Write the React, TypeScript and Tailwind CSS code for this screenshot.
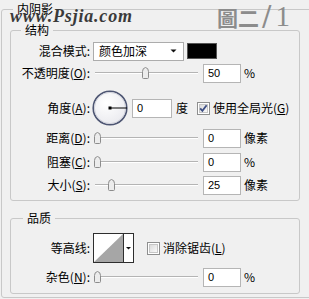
import React from "react";

const Thumb = ({ left }: { left: number }) => (
  <svg
    className="absolute top-[4px]"
    style={{ left }}
    width="9"
    height="12"
    viewBox="0 0 9 12"
  >
    <path
      d="M1.5 4.5 Q1.5 1 4.5 0.5 Q7.5 1 7.5 4.5 L7.5 10.5 Q7.5 11.5 6.5 11.5 L2.5 11.5 Q1.5 11.5 1.5 10.5 Z"
      fill="#ececec"
      stroke="#8c8c8c"
    />
  </svg>
);

const Slider = ({ thumb }: { thumb: number }) => (
  <div className="relative ml-[2px] h-[20px] w-[106px] shrink-0">
    <div className="absolute left-[3px] right-0 top-[9px] h-[1px] bg-[#b4b4b4]" />
    <div className="absolute left-[3px] right-0 top-[10px] h-[1px] bg-white" />
    <Thumb left={thumb} />
  </div>
);

const Label = ({ children }: { children: React.ReactNode }) => (
  <div className="w-[79px] shrink-0 text-right">{children}</div>
);

const U = ({ children }: { children: React.ReactNode }) => (
  <span className="underline underline-offset-[1px]">{children}</span>
);

const Num = ({ value }: { value: string }) => (
  <div className="ml-[5px] h-[19px] w-[38px] shrink-0 border border-[#b5b5b5] bg-white pl-[4px] font-['Liberation_Sans',sans-serif] text-[11px] leading-[17px]">
    {value}
  </div>
);

const SliderRow = ({
  label,
  thumb,
  value,
  unit,
  className,
}: {
  label: React.ReactNode;
  thumb: number;
  value: string;
  unit: string;
  className: string;
}) => (
  <div className={"flex h-[20px] items-center " + className}>
    <Label>{label}</Label>
    <Slider thumb={thumb} />
    <Num value={value} />
    <div className="ml-[3px]">{unit}</div>
  </div>
);

const CheckBox = ({ checked }: { checked: boolean }) => (
  <svg width="13" height="13" viewBox="0 0 13 13" className="shrink-0">
    <defs>
      <linearGradient id={checked ? "cbg1" : "cbg2"} x1="0" y1="0" x2="1" y2="1">
        <stop offset="0" stopColor="#d9d9d9" />
        <stop offset="1" stopColor="#fbfbfb" />
      </linearGradient>
    </defs>
    <rect x="0.5" y="0.5" width="12" height="12" fill="#fff" stroke="#8e8f8f" />
    <rect x="2.5" y="2.5" width="8" height="8" fill={`url(#${checked ? "cbg1" : "cbg2"})`} stroke="#c6c6c6" />
    {checked && (
      <path d="M3.2 6.3 L5.4 8.8 L9.6 3.2" fill="none" stroke="#3d4e84" strokeWidth="1.8" />
    )}
  </svg>
);

export default function App() {
  return (
    <div className="relative h-[299px] w-[309px] overflow-hidden bg-[#f0f0f0] font-['Noto_Sans_CJK_SC',sans-serif] text-[12px] leading-[14px] text-black">
      <fieldset className="ml-[1px] mt-[2px] w-[330px] rounded-[3px] border border-[#c8c8c8] pb-[3px] pl-[8px]">
        <legend className="ml-[3px] px-[4px] leading-[14px]">内阴影</legend>

        <fieldset className="mt-[7px] w-[290px] rounded-[3px] border border-[#c8c8c8] pb-[5px]">
          <legend className="ml-[10px] px-[4px] leading-[14px]">结构</legend>

          <div className="mt-[4px] flex h-[20px] items-center">
            <Label>混合模式:</Label>
            <div className="ml-[3px] flex h-[19px] w-[91px] shrink-0 items-center border border-[#acacac] bg-white pl-[5px]">
              <span className="flex-1">颜色加深</span>
              <svg width="7" height="4" viewBox="0 0 7 4" className="mr-[6px]">
                <path d="M0.5 0.5 L6.5 0.5 L3.5 3.5 Z" fill="#111" />
              </svg>
            </div>
            <div className="ml-[3px] h-[16px] w-[30px] shrink-0 border border-[#555] bg-black" />
          </div>

          <SliderRow
            className="mt-[2px]"
            label={
              <>
                不透明度(<U>O</U>):
              </>
            }
            thumb={49}
            value="50"
            unit="%"
          />

          <div className="mt-[7px] flex h-[36px] items-center">
            <Label>
              角度(<U>A</U>):
            </Label>
            <svg width="36" height="36" viewBox="0 0 36 36" className="ml-[2px] shrink-0">
              <defs>
                <radialGradient id="dial" cx="0.4" cy="0.35" r="0.7">
                  <stop offset="0" stopColor="#ffffff" />
                  <stop offset="1" stopColor="#e9e9ee" />
                </radialGradient>
              </defs>
              <circle cx="18" cy="18" r="16.8" fill="url(#dial)" stroke="#4d5572" strokeWidth="1.6" />
              <circle cx="18" cy="18" r="15.6" fill="none" stroke="#c9cbd6" strokeWidth="0.8" />
              <line x1="18" y1="18" x2="35" y2="18" stroke="#000" strokeWidth="1" />
              <rect x="16.5" y="16.5" width="3" height="3" fill="#000" />
            </svg>
            <div className="ml-[4px] h-[19px] w-[40px] shrink-0 border border-[#b5b5b5] bg-white pl-[4px] font-['Liberation_Sans',sans-serif] text-[11px] leading-[17px]">
              0
            </div>
            <div className="ml-[4px]">度</div>
            <div className="ml-[9px] flex items-center">
              <CheckBox checked />
              <span className="ml-[3px]">
                使用全局光(<U>G</U>)
              </span>
            </div>
          </div>

          <SliderRow
            className="mt-[2px]"
            label={
              <>
                距离(<U>D</U>):
              </>
            }
            thumb={1}
            value="0"
            unit="像素"
          />
          <SliderRow
            className="mt-[4px]"
            label={
              <>
                阻塞(<U>C</U>):
              </>
            }
            thumb={1}
            value="0"
            unit="%"
          />
          <SliderRow
            className="mt-[3px]"
            label={
              <>
                大小(<U>S</U>):
              </>
            }
            thumb={15}
            value="25"
            unit="像素"
          />
        </fieldset>

        <fieldset className="mt-[10px] w-[290px] rounded-[3px] border border-[#c8c8c8] pb-[6px]">
          <legend className="ml-[12px] px-[4px] leading-[14px]">品质</legend>

          <div className="mt-[8px] flex h-[30px] items-center">
            <Label>等高线:</Label>
            <svg width="41" height="30" viewBox="0 0 41 30" className="ml-[3px] shrink-0">
              <rect x="0.5" y="0.5" width="40" height="29" fill="#fff" stroke="#2e2e2e" />
              <polygon points="1,29 30,1 30,29" fill="#a6a6a6" />
              <line x1="30.5" y1="1" x2="30.5" y2="29" stroke="#2e2e2e" />
              <path d="M33 14 L38 14 L35.5 16.5 Z" fill="#111" />
            </svg>
            <div className="ml-[13px] flex items-center">
              <CheckBox checked={false} />
              <span className="ml-[3px]">
                消除锯齿(<U>L</U>)
              </span>
            </div>
          </div>

          <SliderRow
            className="mt-[4px]"
            label={
              <>
                杂色(<U>N</U>):
              </>
            }
            thumb={1}
            value="0"
            unit="%"
          />
        </fieldset>
      </fieldset>

      <div className="absolute left-[10px] top-[6px] font-['Liberation_Serif',serif] text-[18px] font-bold italic leading-[20px] tracking-[0.8px] text-[#3a3a3a]">
        www.Psjia.com
      </div>
      <div className="absolute left-[217px] top-[2px] flex items-baseline text-[#8c8c8c]">
        <span className="font-['Noto_Sans_CJK_TC',sans-serif] text-[21px] font-bold leading-[28px]">圖二</span>
        <span className="ml-[3px] font-['DejaVu_Serif',serif] text-[28px] font-light leading-[28px]">/</span>
        <span className="ml-[4px] font-['Liberation_Serif',serif] text-[29px] leading-[28px]">1</span>
      </div>
    </div>
  );
}
